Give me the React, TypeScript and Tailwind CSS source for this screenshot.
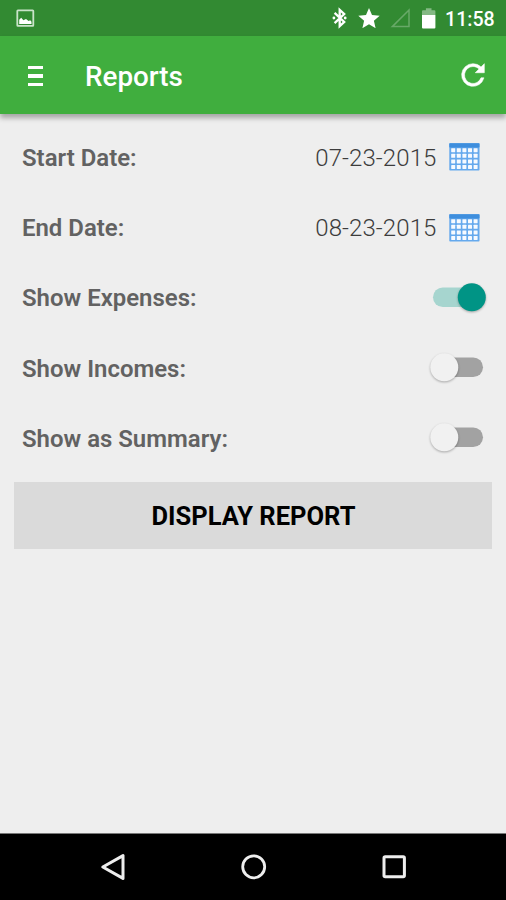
import React, { useState } from 'react';

function StatusBar() {
  return (
    <div className="flex h-9 items-center bg-[#328a32] text-white">
      <svg className="ml-4 shrink-0" width="19" height="19" viewBox="0 0 19 19">
        <rect x="1.3" y="1.3" width="16" height="15.6" rx="0.6" fill="none" stroke="#c9e3c9" strokeWidth="1.8" />
        <path d="M3.2 14.9v-4.2l2-1.9 2.2 2.5 2.6-1.3 2.6 1.9 1.6-.7 1.3 1.5v2.2z" fill="#fff" />
      </svg>
      <svg className="ml-auto shrink-0" width="16" height="22" viewBox="0 0 16 22">
        <path d="M2.6 5.8l9.6 9.2-4.5 4.2V2.8l4.5 4.2-9.6 9.2" fill="none" stroke="#fff" strokeWidth="2.3" />
        <circle cx="1.9" cy="11" r="1.4" fill="#fff" />
        <circle cx="13.2" cy="11" r="1.4" fill="#fff" />
      </svg>
      <svg className="ml-2.5 shrink-0" width="22" height="20" viewBox="0 0 22 20">
        <path d="M11 0l3 7 7.7.7-5.8 5.1 1.7 7.4L11 16.3l-6.6 3.9 1.7-7.4L.3 7.7 8 7z" fill="#fff" />
      </svg>
      <svg className="ml-2.5 shrink-0" width="21" height="20" viewBox="0 0 21 20">
        <path d="M2.3 18.6L19 2v16.6z" fill="none" stroke="#68a968" strokeWidth="1.5" />
      </svg>
      <svg className="ml-2.5 shrink-0" width="16" height="21" viewBox="0 0 16 21">
        <path d="M1 7V3.2q0-1 1-1h2.9V.3h5.6v1.9h2.9q1 0 1 1V7z" fill="#84b984" />
        <path d="M1 7h13.4v12.4q0 1-1 1H2q-1 0-1-1z" fill="#fff" />
      </svg>
      <span className="mt-[3px] mr-[13px] ml-[8px] w-[48px] text-[19.6px] leading-none font-medium whitespace-nowrap">11:58</span>
    </div>
  );
}

function AppBar() {
  return (
    <header className="flex h-[78px] items-center bg-[#40ae3e] pt-0.5 text-white shadow-[0_4px_5px_0_rgba(0,0,0,0.3)]">
      <button aria-label="Menu" className="ml-7 flex w-[15px] flex-col gap-[5px]">
        <span className="h-[3.5px] bg-white" />
        <span className="h-[3.5px] bg-white" />
        <span className="h-[3.5px] bg-white" />
      </button>
      <h1 className="ml-[42px] pt-0.5 text-[27.8px] leading-8 font-medium">Reports</h1>
      <button aria-label="Refresh" className="mr-4 mb-0.5 ml-auto">
        <svg className="block" width="34" height="34" viewBox="0 0 24 24" fill="#fff" stroke="#fff" strokeWidth="0.4">
          <path d="M17.65 6.35A7.958 7.958 0 0 0 12 4a8 8 0 1 0 7.73 10h-2.08A6 6 0 1 1 12 6c1.66 0 3.14.69 4.22 1.78L13.6 10.4h6.4V4z" />
        </svg>
      </button>
    </header>
  );
}

function CalendarIcon() {
  return (
    <svg width="31" height="28" viewBox="0 0 31 28">
      <rect x="0.3" y="0.2" width="30.2" height="27.4" rx="0.8" fill="#65a9ed" />
      <rect x="0.3" y="0.2" width="30.2" height="4.2" rx="0.6" fill="#3e8edd" />
      {[0, 1, 2, 3].map((row) =>
        [0, 1, 2, 3, 4].map((col) => (
          <rect key={`${row}-${col}`} x={2.2 + col * 5.6} y={5.2 + row * 5.6} width="4" height="4" rx="0.4" fill="#f6faff" />
        )),
      )}
    </svg>
  );
}

function Row({ label, children }: { label: string; children: React.ReactNode }) {
  return (
    <div className="flex h-[70.25px] items-center justify-between pl-[22px]">
      <span className="pt-px text-[23.95px] leading-8 font-semibold text-[#626262]">{label}</span>
      {children}
    </div>
  );
}

function DateField({ value }: { value: string }) {
  return (
    <button className="mr-[26.5px] flex items-center gap-3">
      <span className="pt-px text-[24px] leading-8 font-light tracking-[0.1px] text-[#3c3c3c]">{value}</span>
      <CalendarIcon />
    </button>
  );
}

function Switch({ initial }: { initial: boolean }) {
  const [on, setOn] = useState(initial);
  return (
    <button role="switch" aria-checked={on} onClick={() => setOn(!on)} className="mr-[17px]">
      <svg width="62" height="40" viewBox="0 0 62 40" className="block overflow-visible">
        <rect x={on ? 6 : 10} y="9.5" width={on ? 50 : 46} height="19.6" rx="9.8" fill={on ? '#a6d5cf' : '#a2a2a2'} />
        <circle
          cx={on ? 44.8 : 17.3}
          cy="19.3"
          r="14"
          fill={on ? '#009485' : '#f1f1f1'}
          className="drop-shadow-[0_1px_1px_rgba(0,0,0,0.3)]"
        />
      </svg>
    </button>
  );
}

export default function App() {
  return (
    <div className="flex h-[900px] w-[506px] flex-col overflow-hidden bg-[#eeeeee] font-['Roboto',sans-serif]">
      <StatusBar />
      <AppBar />
      <main className="flex flex-1 flex-col pt-[8.25px]">
        <Row label="Start Date:"><DateField value="07-23-2015" /></Row>
        <Row label="End Date:"><DateField value="08-23-2015" /></Row>
        <Row label="Show Expenses:"><Switch initial={true} /></Row>
        <Row label="Show Incomes:"><Switch initial={false} /></Row>
        <Row label="Show as Summary:"><Switch initial={false} /></Row>
        <button className="mx-3.5 mt-[8.5px] h-[67px] bg-[#dadada] pt-0.5 pl-px text-[25.5px] font-bold text-black">DISPLAY REPORT</button>
      </main>
      <nav className="flex h-[67px] items-center justify-center gap-[110px] border-t border-[#777] bg-black pl-0.5">
        <svg width="30" height="30" viewBox="0 0 30 30">
          <path d="M3.8 15L24 3.6v22.8z" fill="none" stroke="#eee" strokeWidth="3" strokeLinejoin="round" />
        </svg>
        <svg width="30" height="30" viewBox="0 0 30 30">
          <circle cx="14.7" cy="14.8" r="11" fill="none" stroke="#eee" strokeWidth="2.8" />
        </svg>
        <svg width="30" height="30" viewBox="0 0 30 30">
          <rect x="5" y="4.8" width="20.4" height="20" rx="1.2" fill="none" stroke="#eee" strokeWidth="3" />
        </svg>
      </nav>
    </div>
  );
}
